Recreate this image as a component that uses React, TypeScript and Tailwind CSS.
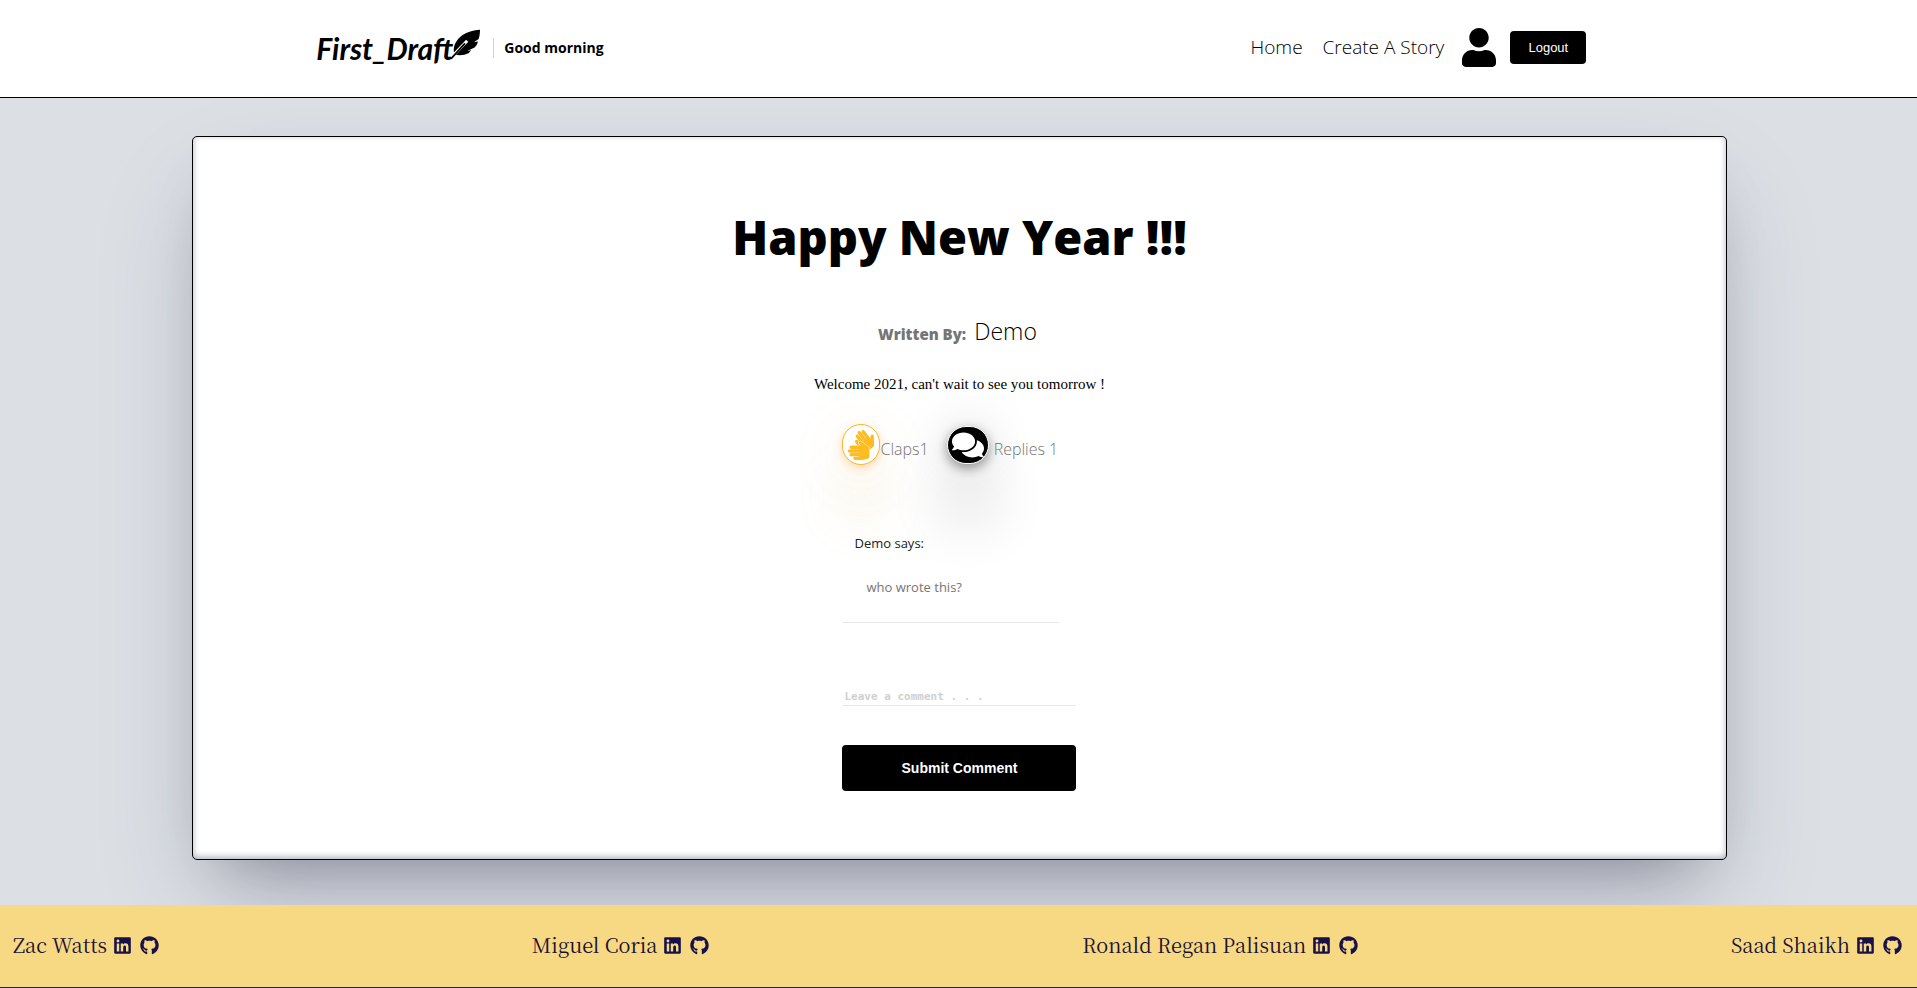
import { FaUser, FaSignLanguage, FaComments, FaLinkedin, FaGithub } from "react-icons/fa";

const authors = ["Zac Watts", "Miguel Coria", "Ronald Regan Palisuan", "Saad Shaikh"];

function Quill() {
  return (
    <svg viewBox="0 0 95 95" className="mb-2 -ml-1 size-8" aria-hidden="true">
      <path
        d="M92 5C70 7 42 14 27 33C15 48 12 62 16 78C28 82 44 82 58 75L66 66L54 68L76 58C82 52 84 47 86 40L74 42L88 33C91 24 92 14 92 5Z"
        fill="currentColor"
      />
      <path d="M12 82L54 38" stroke="white" strokeWidth="9" fill="none" />
      <path d="M7 90L46 47" stroke="currentColor" strokeWidth="5" strokeLinecap="round" fill="none" />
    </svg>
  );
}

function Header() {
  return (
    <header className="flex h-[98px] items-center justify-between border-b border-black bg-white pr-[17.25%] pb-0.5 pl-[16.5%]">
      <div className="flex items-center">
        <a href="#home" className="flex items-center">
          <span className="font-['Lato','Liberation_Sans',sans-serif] text-[30px] leading-10 font-bold whitespace-nowrap italic">First_Draft</span>
          <Quill />
        </a>
        <span className="ml-3 border-l border-gray-300 pl-2.5 text-sm leading-5 font-bold">Good morning</span>
      </div>
      <nav className="flex items-center">
        <a href="#home" className="text-[19px] font-light">Home</a>
        <a href="#create" className="ml-5 text-[19px] font-light">Create A Story</a>
        <a href="#profile" aria-label="Profile" className="ml-[18px]">
          <FaUser className="h-[39px] w-[34px]" />
        </a>
        <button className="ml-3.5 h-[33px] w-[76px] rounded bg-black font-['Liberation_Sans',sans-serif] text-[13px] text-white">Logout</button>
      </nav>
    </header>
  );
}

function Story() {
  return (
    <article className="mt-[38px] mb-[44px] ml-[10%] box-content flex w-4/5 flex-col items-center rounded-[5px] border border-black bg-white pt-[67px] pb-[68px] shadow-[0_50px_100px_-20px_rgba(50,50,93,0.25),0_30px_60px_-30px_rgba(0,0,0,0.3),inset_0_-2px_6px_0_rgba(10,37,64,0.35)]">
      <h1 className="text-[47px] leading-[66px] font-extrabold">Happy New Year !!!</h1>
      <p className="mt-[43px] mr-1 flex items-baseline gap-2 leading-9">
        <span className="text-[15px] font-extrabold text-[#757575]">Written By:</span>
        <span className="text-[23px] font-light">Demo</span>
      </p>
      <p className="mt-5 font-['Liberation_Serif',serif] text-[15px] leading-6">Welcome 2021, can't wait to see you tomorrow !</p>
      <div className="w-[234px]">
        <div className="mt-7 flex items-center text-base font-light text-[#757575]">
          <button aria-label="Clap" className="flex h-[41px] w-[38px] items-center justify-center rounded-full border border-[#fbb829] bg-white text-[#fdbc22] shadow-[0_52px_50px_rgba(225,180,90,0.2),0_3px_10px_rgba(251,140,0,0.3),0_10px_60px_rgba(225,180,90,0.14)]">
            <FaSignLanguage className="size-[30px]" />
          </button>
          <span className="pt-2">Claps1</span>
          <button aria-label="Show replies" className="ml-[18px] flex h-[38px] w-[42px] items-center justify-center rounded-full border border-white bg-black text-white shadow-[0_52px_60px_rgba(0,0,0,0.24),0_4px_12px_rgba(0,0,0,0.4),0_0_50px_rgba(0,0,0,0.16)]">
            <FaComments className="size-8" />
          </button>
          <span className="ml-[5px] pt-2">Replies 1</span>
        </div>
        <section className="mt-[68px] mr-[17px] border-b border-gray-200 pb-[25px] text-[13px] leading-5">
          <h2 className="pl-3 text-[#222]">Demo says:</h2>
          <p className="mt-6 pl-6 text-[#757575]">who wrote this?</p>
        </section>
        <form>
          <input aria-label="Comment" placeholder="Leave a comment . . ." className="mt-[65px] block h-[18px] w-full border-b border-gray-200 px-0.5 font-['DejaVu_Sans_Mono',monospace] text-[11px] font-bold outline-none placeholder:text-[#d0d0d0]" />
          <button type="button" className="mt-[39px] h-[46px] w-full rounded bg-black font-['Liberation_Sans',sans-serif] text-sm font-black text-white">Submit Comment</button>
        </form>
      </div>
    </article>
  );
}

function Footer() {
  return (
    <footer className="relative flex h-[83px] items-center justify-between border-b border-[#2b2416] bg-[#f6d982] pr-[15px] pb-0.5 pl-[13px] font-['Noto_Serif_CJK_SC','Noto_Serif','Liberation_Serif',serif] text-[#1c1033]">
      {authors.map((name) => (
        <div key={name} className="flex items-center text-xl">
          {name}
          <a href="#linkedin" aria-label={name + " on LinkedIn"} className="ml-1.5 text-[#17104a]"><FaLinkedin className="size-[19px]" /></a>
          <a href="#github" aria-label={name + " on GitHub"} className="ml-2 text-[#17104a]"><FaGithub className="size-[19px]" /></a>
        </div>
      ))}
    </footer>
  );
}

export default function App() {
  return (
    <div className="flex min-h-screen flex-col bg-[#dce0e5] font-['Open_Sans',sans-serif] text-black">
      <Header />
      <main className="grow">
        <Story />
      </main>
      <Footer />
    </div>
  );
}
